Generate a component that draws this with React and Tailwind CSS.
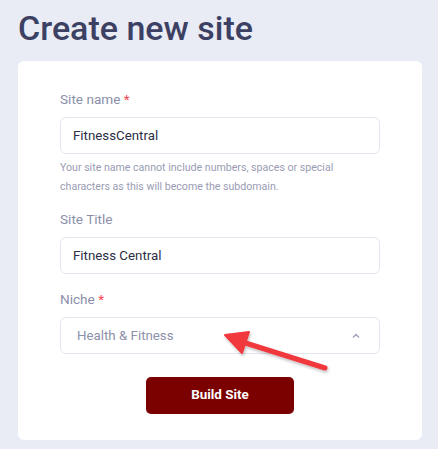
import React from "react";

function Field({ label, required, value, muted, children }) {
  return (
    <div>
      <label className="block text-[13.6px] leading-5 text-[#8b8ea9]">
        {label}
        {required && <span className="text-[#f0484f]"> *</span>}
      </label>
      <div className="mt-[8px] h-[37px] rounded-[6px] border border-[#e3e5ef] bg-white flex items-center justify-between px-3">
        <span className={muted ? "text-[13.3px] text-[#8d90aa] pl-1" : "text-[13.3px] text-[#2b2e45]"}>
          {value}
        </span>
        {children}
      </div>
    </div>
  );
}

export default function App() {
  return (
    <div
      className="w-[438px] h-[449px] bg-[#e9ebf5] pl-[18px] pr-[16px] pt-[6px] overflow-hidden"
      style={{ fontFamily: "Roboto, 'Noto Sans', sans-serif" }}
    >
      <h1 className="text-[34px] leading-[44px] font-medium text-[#3c4062]">
        Create new site
      </h1>
      <div className="relative mt-[11px] bg-white rounded-[6px] h-[379px] px-[42px] pt-[28px]">
        <Field label="Site name" required value="FitnessCentral" />
        <p className="mt-[4px] text-[10.6px] leading-[19px] text-[#9a9cb4]">
          Your site name cannot include numbers, spaces or special
          <br />
          characters as this will become the subdomain.
        </p>
        <div className="mt-[13px]">
          <Field label="Site Title" value="Fitness Central" />
        </div>
        <div className="mt-[15px]">
          <Field label="Niche" required value="Health & Fitness" muted>
            <svg width="10" height="8" viewBox="0 0 10 8" className="mr-[6px]">
              <path d="M2 5.5 L5 2.5 L8 5.5" fill="none" stroke="#9ea1b8" strokeWidth="1.4" />
            </svg>
          </Field>
        </div>
        <div className="flex justify-center mt-[23px]">
          <button className="w-[148px] h-[37px] rounded-[5px] bg-[#7b0000] text-white text-[13.4px] font-bold">
            Build Site
          </button>
        </div>
        <svg
          className="absolute left-0 top-0 pointer-events-none"
          width="404"
          height="379"
          viewBox="18 61 404 379"
        >
          <defs>
            <filter id="sh" x="-20%" y="-50%" width="140%" height="200%">
              <feDropShadow dx="1" dy="2" stdDeviation="1.5" floodColor="#000" floodOpacity="0.25" />
            </filter>
          </defs>
          <g filter="url(#sh)" fill="#f0393e" stroke="#f0393e" strokeLinecap="round" strokeLinejoin="round">
            <line x1="325" y1="368" x2="236" y2="340" strokeWidth="5" />
            <polygon points="225,335 249,332 242,353" strokeWidth="2" />
          </g>
        </svg>
      </div>
    </div>
  );
}
